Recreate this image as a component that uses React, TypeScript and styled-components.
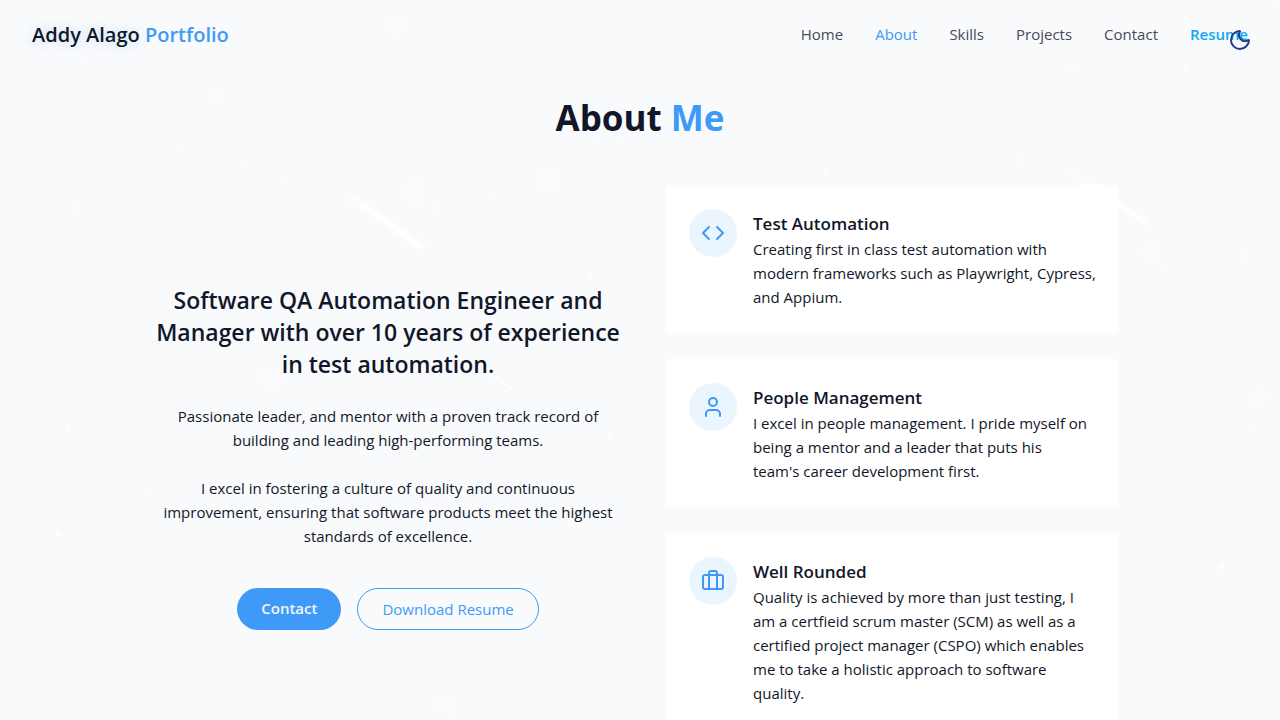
import React from "react";
import styled, { createGlobalStyle } from "styled-components";
import { Code, User, Briefcase, Moon } from "lucide-react";

const Global = createGlobalStyle`
  *, *::before, *::after { box-sizing: border-box; }
  body {
    margin: 0;
    background: #f9fafc;
    color: #111729;
    font-family: "Segoe UI", "Open Sans", "Noto Sans", sans-serif;
    font-size: 15px;
    line-height: 24px;
  }
  h1, h2, h3, p { margin: 0; }
  a { color: inherit; text-decoration: none; }
  button { font: inherit; cursor: pointer; }
`;

const Page = styled.div`
  position: relative;
  overflow: hidden;
`;

const Sky = styled.svg`
  position: absolute;
  top: 0;
  left: 0;
  pointer-events: none;
`;

const Header = styled.header`
  position: relative;
  display: flex;
  align-items: center;
  justify-content: space-between;
  padding: 20px 32px;
`;

const Logo = styled.a`
  font-size: 20px;
  line-height: 30px;
  font-weight: 600;
`;

const Glow = styled.span`
  text-shadow: 0 0 12px rgba(56, 160, 220, 0.3);
`;

const Accent = styled.span`
  color: #3f99f7;
`;

const Nav = styled.nav`
  display: flex;
  gap: 32px;
  padding-bottom: 2px;
`;

const NavLink = styled.a<{ $tone?: "active" | "resume" }>`
  color: ${(p) => (p.$tone === "active" ? "#3f99f7" : p.$tone === "resume" ? "#0ca9f2" : "#454a58")};
  font-weight: ${(p) => (p.$tone === "resume" ? 600 : 400)};
`;

const ThemeToggle = styled.button`
  position: absolute;
  top: 20px;
  right: 20px;
  display: flex;
  padding: 8px;
  border: 0;
  background: none;
  color: #1e3a8a;
`;

const Section = styled.section`
  position: relative;
  max-width: 1022px;
  margin: 0 auto;
  padding: 28px 32px 96px;
`;

const Title = styled.h2`
  margin-bottom: 47px;
  font-size: 35px;
  line-height: 40px;
  font-weight: 700;
  text-align: center;
`;

const Columns = styled.div`
  display: grid;
  grid-template-columns: 1fr 1fr;
  gap: 50px;
  align-items: center;
`;

const Intro = styled.div`
  display: flex;
  flex-direction: column;
  gap: 24px;
  text-align: center;
`;

const Lead = styled.h3`
  margin: 0 -8px;
  font-size: 23px;
  line-height: 32px;
  font-weight: 600;
`;

const Actions = styled.div`
  display: flex;
  justify-content: center;
  gap: 16px;
  padding-top: 16px;
`;

const Button = styled.a<{ $filled?: boolean }>`
  padding: ${(p) => (p.$filled ? "8px 24px 10px" : "8px 24px")};
  border: ${(p) => (p.$filled ? "0" : "1px solid #3f99f7")};
  border-radius: 21px;
  background: ${(p) => (p.$filled ? "#3f99f7" : "transparent")};
  color: ${(p) => (p.$filled ? "#f1f7fe" : "#3f99f7")};
  font-weight: ${(p) => (p.$filled ? 600 : 400)};
`;

const Cards = styled.div`
  display: grid;
  gap: 26px;
`;

const Card = styled.article`
  display: flex;
  align-items: flex-start;
  gap: 16px;
  padding: 24px 16px 24px 24px;
  border-radius: 4px;
  background: #fff;
`;

const IconDisc = styled.div`
  display: flex;
  flex-shrink: 0;
  padding: 12px;
  border-radius: 50%;
  background: #ebf5fe;
  color: #3f99f7;
`;

const CardTitle = styled.h4`
  margin: 0;
  padding-top: 2px;
  font-size: 17px;
  line-height: 26px;
  font-weight: 600;
`;

const CardText = styled.p`
  white-space: pre-line;
`;

const links = ["Home", "About", "Skills", "Projects", "Contact", "Resume"];

const features = [
  {
    Icon: Code,
    title: "Test Automation",
    text: "Creating first in class test automation with\nmodern frameworks such as Playwright, Cypress,\nand Appium.",
  },
  {
    Icon: User,
    title: "People Management",
    text: "I excel in people management. I pride myself on\nbeing a mentor and a leader that puts his\nteam's career development first.",
  },
  {
    Icon: Briefcase,
    title: "Well Rounded",
    text: "Quality is achieved by more than just testing, I\nam a certfieid scrum master (SCM) as well as a\ncertified project manager (CSPO) which enables\nme to take a holistic approach to software\nquality.",
  },
];

// x, y, core radius, halo radius
const stars = [
  [81, 62, 1, 0], [217, 94, 1, 8], [397, 26, 1, 10], [178, 145, 1, 0], [245, 163, 1, 0],
  [284, 182, 1, 0], [76, 209, 1, 5], [413, 192, 2, 12], [437, 207, 1, 4], [489, 198, 1, 0],
  [547, 179, 1, 11], [681, 96, 1, 0], [595, 136, 2, 0], [622, 138, 1, 0], [825, 174, 2, 0],
  [1185, 18, 2, 0], [1185, 70, 2, 0], [1072, 68, 1, 5], [1020, 159, 1, 4], [1150, 252, 1, 10],
  [1163, 268, 2, 0], [1246, 257, 1, 4], [1278, 3, 1, 0], [590, 276, 2, 0], [272, 378, 1, 12],
  [609, 438, 2, 0], [1259, 397, 1, 8], [1253, 431, 1, 0], [1222, 567, 2, 4], [68, 428, 2, 0],
  [150, 492, 1, 0], [58, 534, 2, 0], [441, 704, 1, 10], [453, 716, 2, 0], [355, 596, 2, 0],
];

export default function App() {
  return (
    <Page>
      <Global />
      <Sky width="1280" height="900" viewBox="0 0 1280 900" aria-hidden="true">
        <defs>
          <linearGradient id="trail" x1="0" y1="0" x2="1" y2="1">
            <stop offset="0" stopColor="#fff" stopOpacity="0.2" />
            <stop offset="0.4" stopColor="#fff" />
          </linearGradient>
        </defs>
        {stars.map(([x, y, r, halo]) => (
          <g key={`${x}-${y}`} fill="#fff">
            {halo > 0 && <circle cx={x} cy={y} r={halo} opacity="0.3" />}
            <circle cx={x} cy={y} r={r} opacity="0.9" />
          </g>
        ))}
        <g stroke="url(#trail)" strokeLinecap="round">
          <path d="M328 182L421 246" strokeWidth="12" opacity="0.3" />
          <path d="M344 192L420 246" strokeWidth="5" />
          <path d="M1056 161L1145 222" strokeWidth="10" opacity="0.3" />
          <path d="M1070 173L1145 222" strokeWidth="4" />
          <path d="M492 375L512 389" strokeWidth="2" />
        </g>
      </Sky>

      <Header>
        <Logo href="#home">
          <Glow>Addy Alago</Glow> <Accent>Portfolio</Accent>
        </Logo>
        <Nav>
          {links.map((name) => (
            <NavLink
              key={name}
              href={`#${name.toLowerCase()}`}
              $tone={name === "About" ? "active" : name === "Resume" ? "resume" : undefined}
            >
              {name}
            </NavLink>
          ))}
        </Nav>
        <ThemeToggle aria-label="Switch to dark mode">
          <Moon size={24} />
        </ThemeToggle>
      </Header>

      <Section id="about">
        <Title>
          About <Accent>Me</Accent>
        </Title>
        <Columns>
          <Intro>
            <Lead>
              Software QA Automation Engineer and Manager with over 10 years of experience
              <br /> in test automation.
            </Lead>
            <p>
              Passionate leader, and mentor with a proven track record of building and leading
              high-performing teams.
            </p>
            <p>
              I excel in fostering a culture of quality and continuous improvement, ensuring that
              software products meet the highest standards of excellence.
            </p>
            <Actions>
              <Button href="#contact" $filled>
                Contact
              </Button>
              <Button href="#resume">Download Resume</Button>
            </Actions>
          </Intro>
          <Cards>
            {features.map(({ Icon, title, text }) => (
              <Card key={title}>
                <IconDisc>
                  <Icon size={24} />
                </IconDisc>
                <div>
                  <CardTitle>{title}</CardTitle>
                  <CardText>{text}</CardText>
                </div>
              </Card>
            ))}
          </Cards>
        </Columns>
      </Section>
    </Page>
  );
}
